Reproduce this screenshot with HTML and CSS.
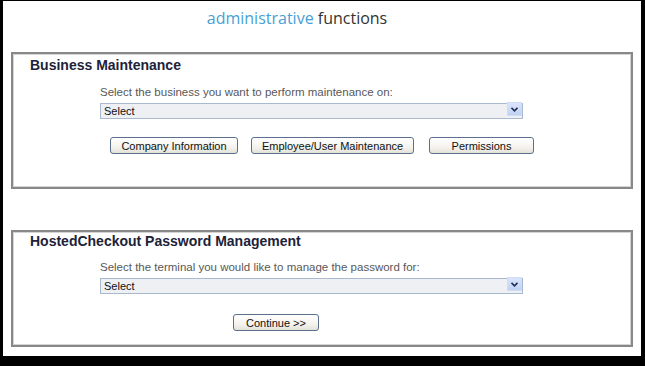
FILE: index.html
```html
<!DOCTYPE html>
<html lang="en">
<head>
  <meta charset="UTF-8">
  <meta name="viewport" content="width=device-width, initial-scale=1.0">
  <title>Administrative Functions</title>
  <link rel="stylesheet" href="styles.css">
</head>
<body>
  <div class="frame">
    <header class="page-title">
      <span class="accent">administrative</span> functions
    </header>

    <section class="panel panel-business">
      <h2>Business Maintenance</h2>
      <div class="field">
        <label for="business">Select the business you want to perform maintenance on:</label>
        <div class="select-wrap">
          <select id="business">
            <option>Select</option>
          </select>
          <span class="arrow">
            <svg width="7" height="5" viewBox="0 0 7 5"><path d="M0.5 0.8 L3.5 3.8 L6.5 0.8" fill="none" stroke="#1f2f56" stroke-width="1.6"/></svg>
          </span>
        </div>
      </div>
      <div class="actions">
        <button class="btn-company">Company Information</button>
        <button class="btn-employee">Employee/User Maintenance</button>
        <button class="btn-perm">Permissions</button>
      </div>
    </section>

    <section class="panel panel-hosted">
      <h2>HostedCheckout Password Management</h2>
      <div class="field">
        <label for="terminal">Select the terminal you would like to manage the password for:</label>
        <div class="select-wrap">
          <select id="terminal">
            <option>Select</option>
          </select>
          <span class="arrow">
            <svg width="7" height="5" viewBox="0 0 7 5"><path d="M0.5 0.8 L3.5 3.8 L6.5 0.8" fill="none" stroke="#1f2f56" stroke-width="1.6"/></svg>
          </span>
        </div>
      </div>
      <div class="actions">
        <button class="btn-continue">Continue &gt;&gt;</button>
      </div>
    </section>
  </div>
</body>
</html>
```

FILE: styles.css
```css
* {
  margin: 0;
  padding: 0;
  box-sizing: border-box;
}

body {
  background-color: #000;
  font-family: 'Liberation Sans', Arial, sans-serif;
  color: #222;
}

.frame {
  width: 645px;
  height: 366px;
  background-color: #fff;
  border-top: 1px solid #000;
  border-left: 3px solid #000;
  border-right: 4px solid #000;
  border-bottom: 10px solid #000;
}

.page-title {
  font-family: 'Open Sans', 'Liberation Sans', sans-serif;
  font-size: 16px;
  line-height: 20px;
  color: #333;
  text-align: center;
  padding: 7px 50px 0 0;
  height: 51px;
}

.page-title .accent {
  color: #4aa0d5;
}

.panel {
  margin: 0 8px;
  border: 2px solid #888;
  box-shadow: inset 0 0 0 1px #d4d4d4;
  padding: 3px 0 0 17px;
}

.panel h2 {
  font-size: 14px;
  line-height: 16px;
  font-weight: bold;
  color: #1d2238;
}

.field {
  margin: 13px 0 0 70px;
  width: 423px;
}

.panel-business {
  padding-bottom: 33px;
}

.panel-hosted {
  margin-top: 41px;
  padding-top: 1px;
  padding-bottom: 14px;
}

.panel-hosted .field {
  margin-top: 12px;
}

.field label {
  display: block;
  font-size: 11.5px;
  line-height: 13px;
  color: #585858;
  margin-bottom: 2px;
}

.select-wrap {
  position: relative;
  height: 16px;
}

.select-wrap select {
  appearance: none;
  -webkit-appearance: none;
  width: 100%;
  height: 16px;
  border: 1px solid #a9bad0;
  background-color: #eef0f4;
  font-family: 'Liberation Sans', Arial, sans-serif;
  font-size: 11px;
  color: #111;
  padding: 0 0 0 3px;
  border-radius: 0;
  outline: none;
}

.select-wrap .arrow {
  position: absolute;
  right: 1px;
  top: 1px;
  width: 15px;
  height: 14px;
  background: linear-gradient(#dbe5fb, #c0d1f4);
  border: 1px solid #cfdcf4;
  display: flex;
  align-items: center;
  justify-content: center;
}

.actions {
  display: flex;
  margin-top: 20px;
  padding-left: 80px;
}

.panel-hosted .actions {
  margin-top: 22px;
  padding-left: 203px;
}

button {
  height: 17px;
  font-family: 'Liberation Sans', Arial, sans-serif;
  font-size: 11px;
  color: #111;
  background: linear-gradient(#ffffff, #f4f3ee 60%, #e4e2d8);
  border: 1px solid #5b6f8c;
  border-radius: 3px;
  cursor: pointer;
}

.btn-company {
  width: 128px;
}

.btn-employee {
  width: 163px;
  margin-left: 13px;
}

.btn-perm {
  width: 105px;
  margin-left: 15px;
}

.btn-continue {
  width: 86px;
}
```
